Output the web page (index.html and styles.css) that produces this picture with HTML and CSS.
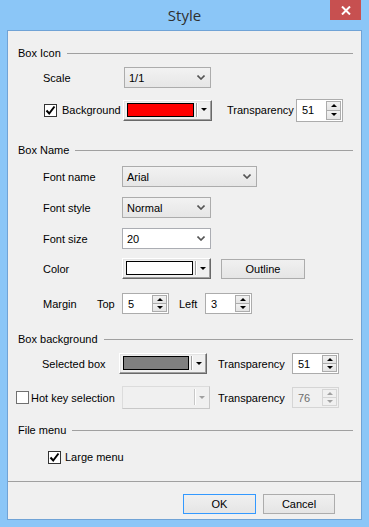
FILE: index.html
```html
<!DOCTYPE html>
<html lang="en">
<head>
    <meta charset="UTF-8">
    <title>Style</title>
    <link rel="stylesheet" href="styles.css">
</head>
<body>
    <div class="window">
        <!-- Title bar -->
        <div class="titlebar">
            <span class="title">Style</span>
            <button class="close-btn">
                <svg width="10" height="9" viewBox="0 0 10 9"><path d="M1 0.5 L9 8.5 M9 0.5 L1 8.5" stroke="#fff" stroke-width="2"/></svg>
            </button>
        </div>

        <div class="client">
            <div class="main">
                <!-- Box Icon -->
                <div class="group-head"><span>Box Icon</span><i class="rule"></i></div>

                <div class="row r-scale">
                    <span class="lbl lbl-scale">Scale</span>
                    <div class="combo gray w87"><span>1/1</span><svg class="chev" width="8" height="5" viewBox="0 0 8 5"><path d="M0.5 0.5 L4 4 L7.5 0.5" fill="none" stroke="#555" stroke-width="1.6"/></svg></div>
                </div>

                <div class="row r-bg">
                    <label class="check-lbl cl-bg"><span class="check on"><svg width="11" height="11" viewBox="0 0 11 11"><path d="M1.5 5.5 L4.2 8.5 L9.5 1.5" fill="none" stroke="#000" stroke-width="2"/></svg></span>Background</label>
                    <div class="color-combo w89"><i class="swatch red"></i><i class="sep"></i><i class="tri"></i></div>
                    <span class="lbl lbl-tr1">Transparency</span>
                    <div class="spin tall"><span class="val">51</span><div class="spinner"><b class="up"></b><b class="down"></b></div></div>
                </div>

                <!-- Box Name -->
                <div class="group-head r-name"><span>Box Name</span><i class="rule"></i></div>

                <div class="row r-fname">
                    <span class="lbl lbl-name">Font name</span>
                    <div class="combo gray w135"><span>Arial</span><svg class="chev" width="8" height="5" viewBox="0 0 8 5"><path d="M0.5 0.5 L4 4 L7.5 0.5" fill="none" stroke="#555" stroke-width="1.6"/></svg></div>
                </div>

                <div class="row r-step">
                    <span class="lbl lbl-name">Font style</span>
                    <div class="combo gray w89"><span>Normal</span><svg class="chev" width="8" height="5" viewBox="0 0 8 5"><path d="M0.5 0.5 L4 4 L7.5 0.5" fill="none" stroke="#555" stroke-width="1.6"/></svg></div>
                </div>

                <div class="row r-step">
                    <span class="lbl lbl-name">Font size</span>
                    <div class="combo white w89"><span>20</span><svg class="chev" width="8" height="5" viewBox="0 0 8 5"><path d="M0.5 0.5 L4 4 L7.5 0.5" fill="none" stroke="#555" stroke-width="1.6"/></svg></div>
                </div>

                <div class="row r-color">
                    <span class="lbl lbl-name">Color</span>
                    <div class="color-combo w89"><i class="swatch white"></i><i class="sep"></i><i class="tri"></i></div>
                    <button class="btn outline">Outline</button>
                </div>

                <div class="row r-margin">
                    <span class="lbl lbl-margin">Margin</span>
                    <span class="lbl lbl-top">Top</span>
                    <div class="spin"><span class="val">5</span><div class="spinner"><b class="up"></b><b class="down"></b></div></div>
                    <span class="lbl lbl-left">Left</span>
                    <div class="spin"><span class="val">3</span><div class="spinner"><b class="up"></b><b class="down"></b></div></div>
                </div>

                <!-- Box background -->
                <div class="group-head r-bbg"><span>Box background</span><i class="rule"></i></div>

                <div class="row r-sel">
                    <span class="lbl lbl-sel">Selected box</span>
                    <div class="color-combo w88"><i class="swatch gray"></i><i class="sep"></i><i class="tri"></i></div>
                    <span class="lbl lbl-tr2">Transparency</span>
                    <div class="spin"><span class="val">51</span><div class="spinner"><b class="up"></b><b class="down"></b></div></div>
                </div>

                <div class="row r-hot">
                    <label class="check-lbl cl-hot"><span class="check off"></span>Hot key selection</label>
                    <div class="color-combo disabled w88"><i class="swatch none"></i><i class="sep"></i><i class="tri"></i></div>
                    <span class="lbl lbl-tr3">Transparency</span>
                    <div class="spin disabled"><span class="val">76</span><div class="spinner"><b class="up"></b><b class="down"></b></div></div>
                </div>

                <!-- File menu -->
                <div class="group-head r-file"><span>File menu</span><i class="rule"></i></div>

                <div class="row r-large">
                    <label class="check-lbl cl-large"><span class="check on"><svg width="11" height="11" viewBox="0 0 11 11"><path d="M1.5 5.5 L4.2 8.5 L9.5 1.5" fill="none" stroke="#000" stroke-width="2"/></svg></span>Large menu</label>
                </div>
            </div>

            <div class="footer">
                <button class="btn default">OK</button>
                <button class="btn cancel">Cancel</button>
            </div>
        </div>
    </div>
</body>
</html>
```

FILE: styles.css
```css
* {
    margin: 0;
    padding: 0;
    box-sizing: border-box;
}

body {
    font-family: 'Liberation Sans', Arial, sans-serif;
    font-size: 11px;
    color: #000;
    background: #8bc6f7;
    overflow: hidden;
}

.window {
    width: 369px;
    height: 527px;
    background: #8bc6f7;
    display: flex;
    flex-direction: column;
}

/* Title bar */
.titlebar {
    height: 30px;
    display: grid;
    grid-template-columns: 1fr auto 1fr;
    padding-right: 8px;
}

.title {
    grid-column: 2;
    font-family: 'Open Sans', 'Noto Sans', sans-serif;
    font-size: 15px;
    color: #2f2f2f;
    line-height: 30px;
    margin-left: 8px;
}

.close-btn {
    grid-column: 3;
    justify-self: end;
    width: 31px;
    height: 20px;
    background: #c75050;
    border: none;
    display: flex;
    align-items: center;
    justify-content: center;
}

/* Client area */
.client {
    height: 490px;
    margin: 0 7px;
    border: 1px solid #70a3d6;
    background: #f0f0f0;
    display: flex;
    flex-direction: column;
}

.main {
    flex: 1;
    padding-top: 15px;
}

.group-head {
    height: 14px;
    display: flex;
    align-items: center;
    padding: 0 8px 0 10px;
}

.group-head .rule {
    flex: 1;
    height: 1px;
    background: #a0a0a0;
    margin-left: 6px;
    margin-top: 1px;
}

.row {
    display: flex;
    align-items: center;
    height: 21px;
}

.r-scale { margin-top: 7px; }
.r-bg { margin-top: 10px; height: 24px; }
.r-name { margin-top: 21px; }
.r-fname { margin-top: 9px; }
.r-step { margin-top: 10px; }
.r-color { margin-top: 9px; }
.r-margin { margin-top: 14px; }
.r-bbg { margin-top: 18px; }
.r-sel { margin-top: 7px; }
.r-hot { margin-top: 12px; height: 23px; }
.r-file { margin-top: 14px; }
.r-large { margin-top: 13px; height: 14px; }

/* Labels */
.lbl { white-space: nowrap; }
.lbl-scale { margin-left: 35px; width: 81px; }
.lbl-name { margin-left: 35px; width: 79px; }
.lbl-tr1 { margin-left: 15px; width: 69px; }
.lbl-margin { margin-left: 35px; width: 54px; }
.lbl-top { width: 25px; }
.lbl-left { margin-left: 10px; width: 26px; }
.lbl-sel { margin-left: 34px; width: 77px; }
.lbl-tr2 { margin-left: 11px; width: 74px; }
.lbl-tr3 { margin-left: 8px; width: 74px; }

/* Checkboxes */
.check-lbl {
    display: flex;
    align-items: center;
    white-space: nowrap;
}

.check {
    width: 13px;
    height: 13px;
    border: 1px solid #333;
    background: #fff;
    display: flex;
    align-items: center;
    justify-content: center;
}

.check.off { border-color: #707070; }

.cl-bg { margin-left: 36px; width: 79px; gap: 5px; }
.cl-hot { margin-left: 8px; width: 106px; gap: 2px; }
.cl-large { margin-left: 40px; gap: 4px; }

/* Combo boxes */
.combo {
    height: 21px;
    border: 1px solid #acacac;
    display: flex;
    align-items: center;
    justify-content: space-between;
    padding: 0 5px 0 4px;
}

.combo.gray { background: linear-gradient(#f2f2f2, #e6e6e6); }
.combo.white { background: #fff; border-color: #abadb3; }

.w87 { width: 87px; }
.w88 { width: 88px; }
.w89 { width: 89px; }
.w135 { width: 135px; }

/* Colour picker combo */
.color-combo {
    height: 21px;
    display: flex;
    align-items: center;
    padding: 2px 3px 3px 3px;
    background: #f0f0f0;
    border-top: 1px solid #fff;
    border-left: 1px solid #fff;
    border-right: 1px solid #696969;
    border-bottom: 1px solid #696969;
    box-shadow: inset -1px -1px 0 #a0a0a0, inset 1px 1px 0 #e3e3e3;
}

.swatch {
    flex: 1;
    align-self: stretch;
    border: 1px solid #000;
}

.swatch.red { background: #ff0000; }
.swatch.white { background: #fff; }
.swatch.gray { background: #808080; }
.swatch.none { border: none; }

.sep {
    width: 2px;
    align-self: stretch;
    border-left: 1px solid #a0a0a0;
    border-right: 1px solid #fff;
    margin: 0 3px 0 2px;
}

.tri {
    width: 0;
    height: 0;
    border-left: 3px solid transparent;
    border-right: 3px solid transparent;
    border-top: 3px solid #000;
    margin-right: 1px;
}

.color-combo.disabled {
    border-color: #dcdcdc;
    border-right-color: #c8c8c8;
    border-bottom-color: #c8c8c8;
    box-shadow: none;
    height: 23px;
}

.color-combo.disabled .tri { border-top-color: #a0a0a0; }
.color-combo.disabled .sep { border-left-color: #c8c8c8; }

/* Spin edits */
.spin {
    width: 47px;
    height: 21px;
    border: 1px solid #acacac;
    background: #fff;
    display: flex;
    align-items: center;
    justify-content: space-between;
}

.spin.tall { height: 23px; }

.spin .val { padding-left: 5px; }

.spinner {
    width: 15px;
    align-self: stretch;
    display: flex;
    flex-direction: column;
    margin: 1px 1px 1px 0;
}

.spinner b {
    flex: 1;
    border: 1px solid #acacac;
    background: linear-gradient(#f2f2f2, #e4e4e4);
    display: flex;
    align-items: center;
    justify-content: center;
}

.spinner b + b { border-top: none; }

.spinner b::after {
    content: "";
    width: 0;
    height: 0;
    border-left: 3px solid transparent;
    border-right: 3px solid transparent;
}

.spinner .up::after { border-bottom: 3px solid #000; }
.spinner .down::after { border-top: 3px solid #000; }

.spin.disabled {
    background: #f0f0f0;
    border-color: #d5d5d5;
    color: #6d6d6d;
}

.spin.disabled .spinner b {
    border-color: #d5d5d5;
    background: #f0f0f0;
}

.spin.disabled .up::after { border-bottom-color: #a0a0a0; }
.spin.disabled .down::after { border-top-color: #a0a0a0; }

/* Buttons */
.btn {
    height: 20px;
    font-family: inherit;
    font-size: 11px;
    color: #000;
    border: 1px solid #acacac;
    background: linear-gradient(#f0f0f0, #e5e5e5);
}

.btn.outline { width: 84px; margin-left: 10px; }
.btn.default { width: 73px; border-color: #3399ff; }
.btn.cancel { width: 72px; }

.footer {
    height: 38px;
    border-top: 1px solid #a0a0a0;
    display: flex;
    justify-content: flex-end;
    align-items: flex-start;
    gap: 7px;
    padding: 12px 26px 0 0;
}
```
